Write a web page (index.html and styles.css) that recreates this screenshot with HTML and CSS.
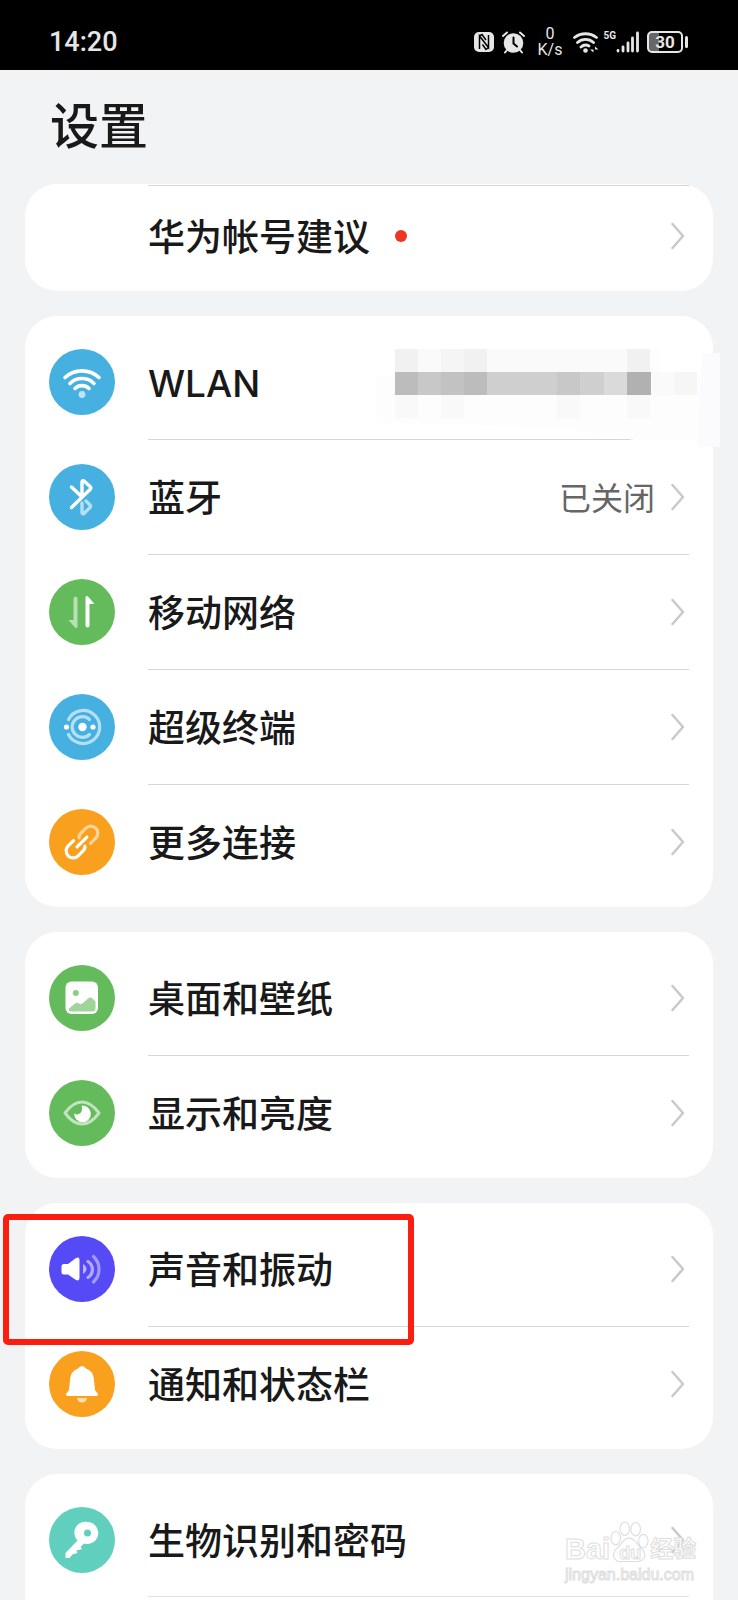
FILE: index.html
```html
<!DOCTYPE html>
<html lang="zh-CN">
<head>
<meta charset="utf-8">
<meta name="viewport" content="width=device-width, initial-scale=1">
<title>设置</title>
<link rel="stylesheet" href="styles.css">
</head>
<body>
<svg class="defs" aria-hidden="true">
  <symbol id="chevron" viewBox="0 0 14 28"><path d="M1.500 2L12 14 1.500 26" fill="none" stroke="#c9c9c9" stroke-width="2.500" stroke-linecap="round" stroke-linejoin="round"/></symbol>
</svg>
<header class="status">
  <time class="clock">14:20</time>
  <div class="indicators">
    <svg class="nfc" width="20" height="22" viewBox="0 0 20 22"><rect y="1" width="20" height="20" rx="5" fill="#e6e6e6"/><path d="M5.500 18V5L14.500 16.500V4M5.500 5L8 3.500 12 9M14.500 16.500L12 18.500 8.500 13.500" fill="none" stroke="#000" stroke-width="1.500"/></svg>
    <svg class="alarm" width="23" height="23" viewBox="0 0 23 23"><circle cx="11.500" cy="12" r="9.800" fill="#e6e6e6"/><path d="M1 5L5 1.500M22 5L18 1.500M5 19L3 21.500M18 19l2 2.500" stroke="#e6e6e6" stroke-width="2" stroke-linecap="round"/><path d="M11.500 6.500V12.500L15 15.500" fill="none" stroke="#000" stroke-width="2" stroke-linecap="round"/></svg>
    <div class="speed"><span>0</span><span>K/s</span></div>
    <svg class="wifi" width="26" height="24" viewBox="0 0 26 24"><g fill="none" stroke="#e6e6e6" stroke-width="2.800" stroke-linecap="round"><path d="M1.500 7.500A18 18 0 0 1 23.500 7.500M4.500 12.500A12 12 0 0 1 20.500 12.500M8 17A7 7 0 0 1 16 16"/></g><circle cx="12.500" cy="20.500" r="2.300" fill="#e6e6e6"/><path d="M20.500 16.500v6l-3.500-3h3.500M22 22.500v-6l3.500 3H22" fill="#e6e6e6"/></svg>
    <div class="cell"><span class="gen">5G</span>
      <svg width="23" height="22" viewBox="0 0 23 22"><path d="M2 19.500v.5M7 16v4M12 12v8M16.500 7v13M21.500 2v18" stroke="#e6e6e6" stroke-width="2.800" stroke-linecap="round"/></svg>
    </div>
    <div class="battery"><span>30</span></div>
  </div>
</header>
<h1 class="title">设置</h1>
<main class="groups">
  <ul class="card card-first">
    <li><a class="row" href="#account"><span class="body"><span class="label">华为帐号建议</span><i class="dot"></i><svg class="chev"><use href="#chevron"/></svg></span></a></li>
  </ul>

  <ul class="card">
    <li><a class="row" href="#wlan">
      <svg class="icon blue" viewBox="0 0 66 66"><g fill="none" stroke="#fff" stroke-width="3.600" stroke-linecap="round"><path d="M16 28.500A25 25 0 0 1 50 28.500M21 34.500A17 17 0 0 1 45 34.500M26 39.500A10 10 0 0 1 40 39.500"/></g><circle cx="33" cy="45.500" r="3.400" fill="#fff" opacity=".65"/></svg>
      <span class="body"><span class="label latin">WLAN</span></span></a>
    </li>
    <li><a class="row" href="#bluetooth">
      <svg class="icon blue" viewBox="0 0 66 66"><g fill="none" stroke="#fff" stroke-width="3.400" stroke-linecap="round" stroke-linejoin="round"><path d="M22.500 23L33 33V17.500Q33.500 16 35 17L41 22.500Q42.500 24 41 25.500L22.500 43.500"/><path d="M33 39v9.500Q33.500 50.500 35 49.500L41 43.500Q42 42 41 41L37 37" opacity=".6"/></g></svg>
      <span class="body"><span class="label">蓝牙</span><span class="value">已关闭</span><svg class="chev"><use href="#chevron"/></svg></span></a>
      <svg class="mosaic" width="345" height="98" viewBox="0 0 345 98" aria-hidden="true">
        <path d="M0 74L180 78 265 92H327V98H345V4H327V26H285V0H20V26H0z" fill="#fdfdfd"/>
        <path d="M328 4h17v94h-22V70h0z" fill="#fbfbfd"/>
        <path d="M20 0h23v23H20zM89 0h23v23H89zM252 0h23v23h-23z" fill="#f1f1f1"/>
        <path d="M43 0h23v23H43zM112 0h140v23H112z" fill="#fafafa"/>
        <path d="M66 0h23v23H66z" fill="#f5f5f5"/>
        <path d="M20 23h23v23H20zM89 23h23v23H89z" fill="#bcbcbc"/>
        <path d="M43 23h23v23H43zM182 23h23v23h-23z" fill="#c8c8c8"/>
        <path d="M66 23h23v23H66z" fill="#c2c2c2"/>
        <path d="M112 23h70v23h-70zM205 23h24v23h-24z" fill="#cfcfcf"/>
        <path d="M229 23h23v23h-23z" fill="#dadada"/>
        <path d="M252 23h24v23h-24z" fill="#b1b1b1"/>
        <path d="M276 23h23v23h-23z" fill="#fafafa"/>
        <path d="M299 23h23v23h-23z" fill="#f6f6f6"/>
        <path d="M20 46h23v23H20zM66 46h23v23H66zM182 46h23v23h-23zM252 46h23v23h-23z" fill="#f9f9f9"/>
      </svg>
    </li>
    <li><a class="row" href="#mobile">
      <svg class="icon green" viewBox="0 0 66 66"><path d="M36.500 18.500Q37 16 39 17.500L45.500 25H40.500V47Q38.500 50 36.500 47z" fill="#fff"/><path d="M28.500 47.500Q28 50 26 48.500L19.500 41H24.500V19Q26.500 16 28.500 19z" fill="#fff" opacity=".55"/></svg>
      <span class="body"><span class="label">移动网络</span><svg class="chev"><use href="#chevron"/></svg></span></a></li>
    <li><a class="row" href="#superdevice">
      <svg class="icon blue" viewBox="0 0 66 66"><g fill="none" stroke="#fff" stroke-width="3.200" stroke-linecap="round" opacity=".6"><path d="M19.500 25.500A16.500 16.500 0 1 1 19.500 40.500"/><path d="M40.500 25.500A10.300 10.300 0 1 0 40.500 40.500"/></g><g fill="#fff"><circle cx="33.500" cy="33" r="4.200"/><circle cx="17.500" cy="33" r="2.600"/><circle cx="44" cy="33" r="2.600"/></g></svg>
      <span class="body"><span class="label">超级终端</span><svg class="chev"><use href="#chevron"/></svg></span></a></li>
    <li><a class="row" href="#more">
      <svg class="icon orange" viewBox="0 0 66 66"><g fill="none" stroke="#fff" stroke-width="3.200" stroke-linecap="round" transform="rotate(-45 33 33)"><path d="M28 26H20.500a7 7 0 0 0 0 14H27.500Q31 40 32 38M26 33H40"/><path d="M38 40H45.500a7 7 0 0 0 0-14H38.500Q35 26 34 28" opacity=".55"/></g></svg>
      <span class="body"><span class="label">更多连接</span><svg class="chev"><use href="#chevron"/></svg></span></a></li>
  </ul>

  <ul class="card">
    <li><a class="row" href="#wallpaper">
      <svg class="icon green" viewBox="0 0 66 66"><rect x="16.500" y="16.500" width="32.500" height="32.500" rx="6" fill="#fff"/><circle cx="26.800" cy="28" r="3" fill="#8ccc84"/><path d="M20 43.500L26 38.500Q28 37 30 38.500 32 40 34 38L39 33.500Q41 31.500 43.500 33.500L46.500 36.500V43Q46.500 46.500 43 46.500H23Q18.500 46.500 20 43.500z" fill="#a0d59a"/></svg>
      <span class="body"><span class="label">桌面和壁纸</span><svg class="chev"><use href="#chevron"/></svg></span></a></li>
    <li><a class="row" href="#display">
      <svg class="icon green" viewBox="0 0 66 66"><path d="M16 33Q24 22 33 22T50 33Q42 44 33 44T16 33z" fill="none" stroke="#fff" stroke-width="3" stroke-linejoin="round" opacity=".6"/><path d="M32.500 25.700A8.300 8.300 0 1 1 25.300 33.200Q28.500 35.800 31.500 33 34 30 32.500 25.700z" fill="#fff"/></svg>
      <span class="body"><span class="label">显示和亮度</span><svg class="chev"><use href="#chevron"/></svg></span></a></li>
  </ul>

  <ul class="card">
    <li><a class="row" href="#sound">
      <svg class="icon violet" viewBox="0 0 66 66"><path d="M12.500 30.500Q12.500 28 15 28H19L27 22Q30.500 20.500 30.500 24V42Q30.500 45.500 27 44L19 38.500H15Q12.500 38.500 12.500 36z" fill="#fff"/><g fill="none" stroke="#fff" stroke-width="3.200" stroke-linecap="round"><path d="M34 28Q37.500 30 37.500 33T34 38z" fill="#fff" stroke="none" opacity=".6"/><path d="M39 25.500A9.500 9.500 0 0 1 39 41.500" opacity=".55"/><path d="M44.500 20.500A17.500 17.500 0 0 1 44.500 46" opacity=".45"/></g></svg>
      <span class="body"><span class="label">声音和振动</span><svg class="chev"><use href="#chevron"/></svg></span></a>
      <div class="highlight" aria-hidden="true"></div>
    </li>
    <li><a class="row" href="#notice">
      <svg class="icon orange" viewBox="0 0 66 66"><path d="M33 15Q35.500 15 37 17.500 44.500 20 45 29L46 39 49 43Q49.500 45 47.500 45H18.500Q16.500 45 17 43L20 39 21 29Q21.500 20 29 17.500 30.500 15 33 15z" fill="#fff"/><path d="M28 47H38Q37 51.500 33 51.500T28 47z" fill="#fff" opacity=".65"/></svg>
      <span class="body"><span class="label">通知和状态栏</span><svg class="chev"><use href="#chevron"/></svg></span></a></li>
  </ul>

  <ul class="card card-last">
    <li><a class="row" href="#biometrics">
      <svg class="icon teal" viewBox="0 0 66 66"><path fill="#fff" fill-rule="evenodd" d="M38.500 15A11 11 0 1 1 35 36.500L31.500 40 33 42Q30 43.500 27.500 43L28.500 45.500Q26 47.500 24 47L20.500 51 16.500 51V46L28.500 33.500A11 11 0 0 1 38.500 15zM38.500 22.500A3.500 3.500 0 1 0 38.500 29.500 3.500 3.500 0 1 0 38.500 22.500z"/></svg>
      <span class="body"><span class="label">生物识别和密码</span><svg class="chev"><use href="#chevron"/></svg></span></a>
      <div class="watermark">
        <div class="brand"><span>Bai</span><span class="paw"><svg width="40" height="44" viewBox="0 0 42 44"><g fill="#fff" stroke="#dedede" stroke-width="1.200"><ellipse cx="6" cy="18" rx="5" ry="7"/><ellipse cx="15.500" cy="8" rx="5" ry="7"/><ellipse cx="27" cy="8.500" rx="5" ry="7"/><ellipse cx="35" cy="21" rx="5" ry="7"/><path d="M20 18C27 18 29 26 34 30 40 37 34 43 28 42.500H12C5 43 1 36 6 30 12 26 13 18 20 18z"/></g></svg><b>du</b></span><span class="cn">经验</span></div>
        <div class="site">jingyan.baidu.com</div>
      </div>
    </li>
  </ul>
</main>
</body>
</html>
```
FILE: styles.css
```css
* { box-sizing: border-box; }

html, body { margin: 0; padding: 0; }

body {
  min-height: 100vh;
  display: flex;
  flex-direction: column;
  background: #f1f3f5;
  color: #191919;
  font-family: "Noto Sans CJK SC", "Noto Sans", sans-serif;
}

.defs { position: absolute; width: 0; height: 0; }

/* Status bar */
.status {
  height: 70px;
  padding: 14px 49px 0 49px;
  display: flex;
  align-items: center;
  justify-content: space-between;
  background: #000;
  color: #e6e6e6;
  font-family: Roboto, sans-serif;
}

.clock { font-size: 27px; line-height: 32px; font-weight: 500; }

.indicators { display: flex; align-items: center; }
.indicators svg { display: block; }
.alarm { margin-left: 8px; }
.speed {
  width: 25px;
  margin-left: 12px;
  display: flex;
  flex-direction: column;
  align-items: center;
  font-size: 16px;
  line-height: 16px;
}
.wifi { margin-left: 11px; }
.cell { display: flex; align-items: flex-start; margin-left: 4px; }
.gen { font: 700 10px/10px Roboto, sans-serif; }
.battery {
  position: relative;
  width: 36px;
  height: 22px;
  margin: 0 6px 0 8px;
  border: 2px solid #e6e6e6;
  border-radius: 5px;
  background: linear-gradient(90deg, #666 30%, #000 30%);
  font-size: 17px;
  line-height: 18px;
  font-weight: 700;
  text-align: center;
}
.battery::after {
  content: "";
  position: absolute;
  right: -7px;
  top: 3px;
  width: 3px;
  height: 12px;
  border-radius: 2px;
  background: #e6e6e6;
}

.title {
  margin: 0;
  padding: 17px 50px 25px;
  font-size: 49px;
  line-height: 72px;
  font-weight: 500;
}

/* Grouped list */
.groups {
  flex: 1;
  display: flex;
  flex-direction: column;
  gap: 25px;
  padding: 0 25px;
}

.card {
  margin: 0;
  padding: 8px 24px;
  list-style: none;
  background: #fff;
  border-radius: 32px;
}
.card li { position: relative; }

.row {
  height: 115px;
  display: flex;
  align-items: center;
  gap: 33px;
  color: inherit;
  text-decoration: none;
}

.icon { flex: none; width: 66px; height: 66px; border-radius: 50%; }
.blue { background: #46b1e1; }
.green { background: #64bb5c; }
.orange { background: #f9a01e; }
.violet { background: #564af7; }
.teal { background: #61cfbe; }

.body {
  flex: 1;
  align-self: stretch;
  display: flex;
  align-items: center;
  padding-right: 4px;
  border-top: 1px solid transparent;
}
.card li + li .body { border-top-color: #d6d6d6; }

.label { padding-bottom: 2px; font-size: 37px; line-height: 54px; font-weight: 500; }
.latin { padding: 3px 0 0; font-family: Inter, sans-serif; }
.value { margin-left: auto; padding-bottom: 3px; font-size: 32px; line-height: 48px; color: #666; }
.chev { flex: none; width: 14px; height: 28px; margin-left: auto; }
.value + .chev { margin-left: 16px; }
.dot { width: 12px; height: 12px; margin-left: 25px; border-radius: 50%; background: #ee3523; }

.card-first { padding: 1px 24px 5px 123px; }
.card-first .row { height: 101px; }
.card-first .body { border-top-color: #d6d6d6; }
.card-last { flex: 1; padding-bottom: 0; border-radius: 32px 32px 0 0; }
.card-last .body { border-bottom: 1px solid #e2e2e2; }

/* Overlays */
.mosaic { position: absolute; right: -31px; top: -90px; }

.highlight {
  position: absolute;
  left: -46px;
  top: 3px;
  width: 411px;
  height: 131px;
  border: 6px solid #fb1d10;
  border-radius: 5px;
  z-index: 1;
}

.watermark {
  position: absolute;
  right: -8px;
  top: 38px;
  width: 132px;
  color: #fff;
  font-family: "Liberation Sans", "Noto Sans CJK SC", sans-serif;
  white-space: nowrap;
  -webkit-text-stroke: 1px #dedede;
}
.brand { display: flex; align-items: flex-end; font-size: 29px; line-height: 30px; font-weight: 700; }
.paw { flex: none; position: relative; width: 40px; height: 44px; }
.paw svg { display: block; }
.paw b { position: absolute; left: 0; right: 0; bottom: 0; text-align: center; font-size: 18px; line-height: 22px; }
.cn { font-size: 23px; }
.site { font-size: 16px; line-height: 22px; }
```
